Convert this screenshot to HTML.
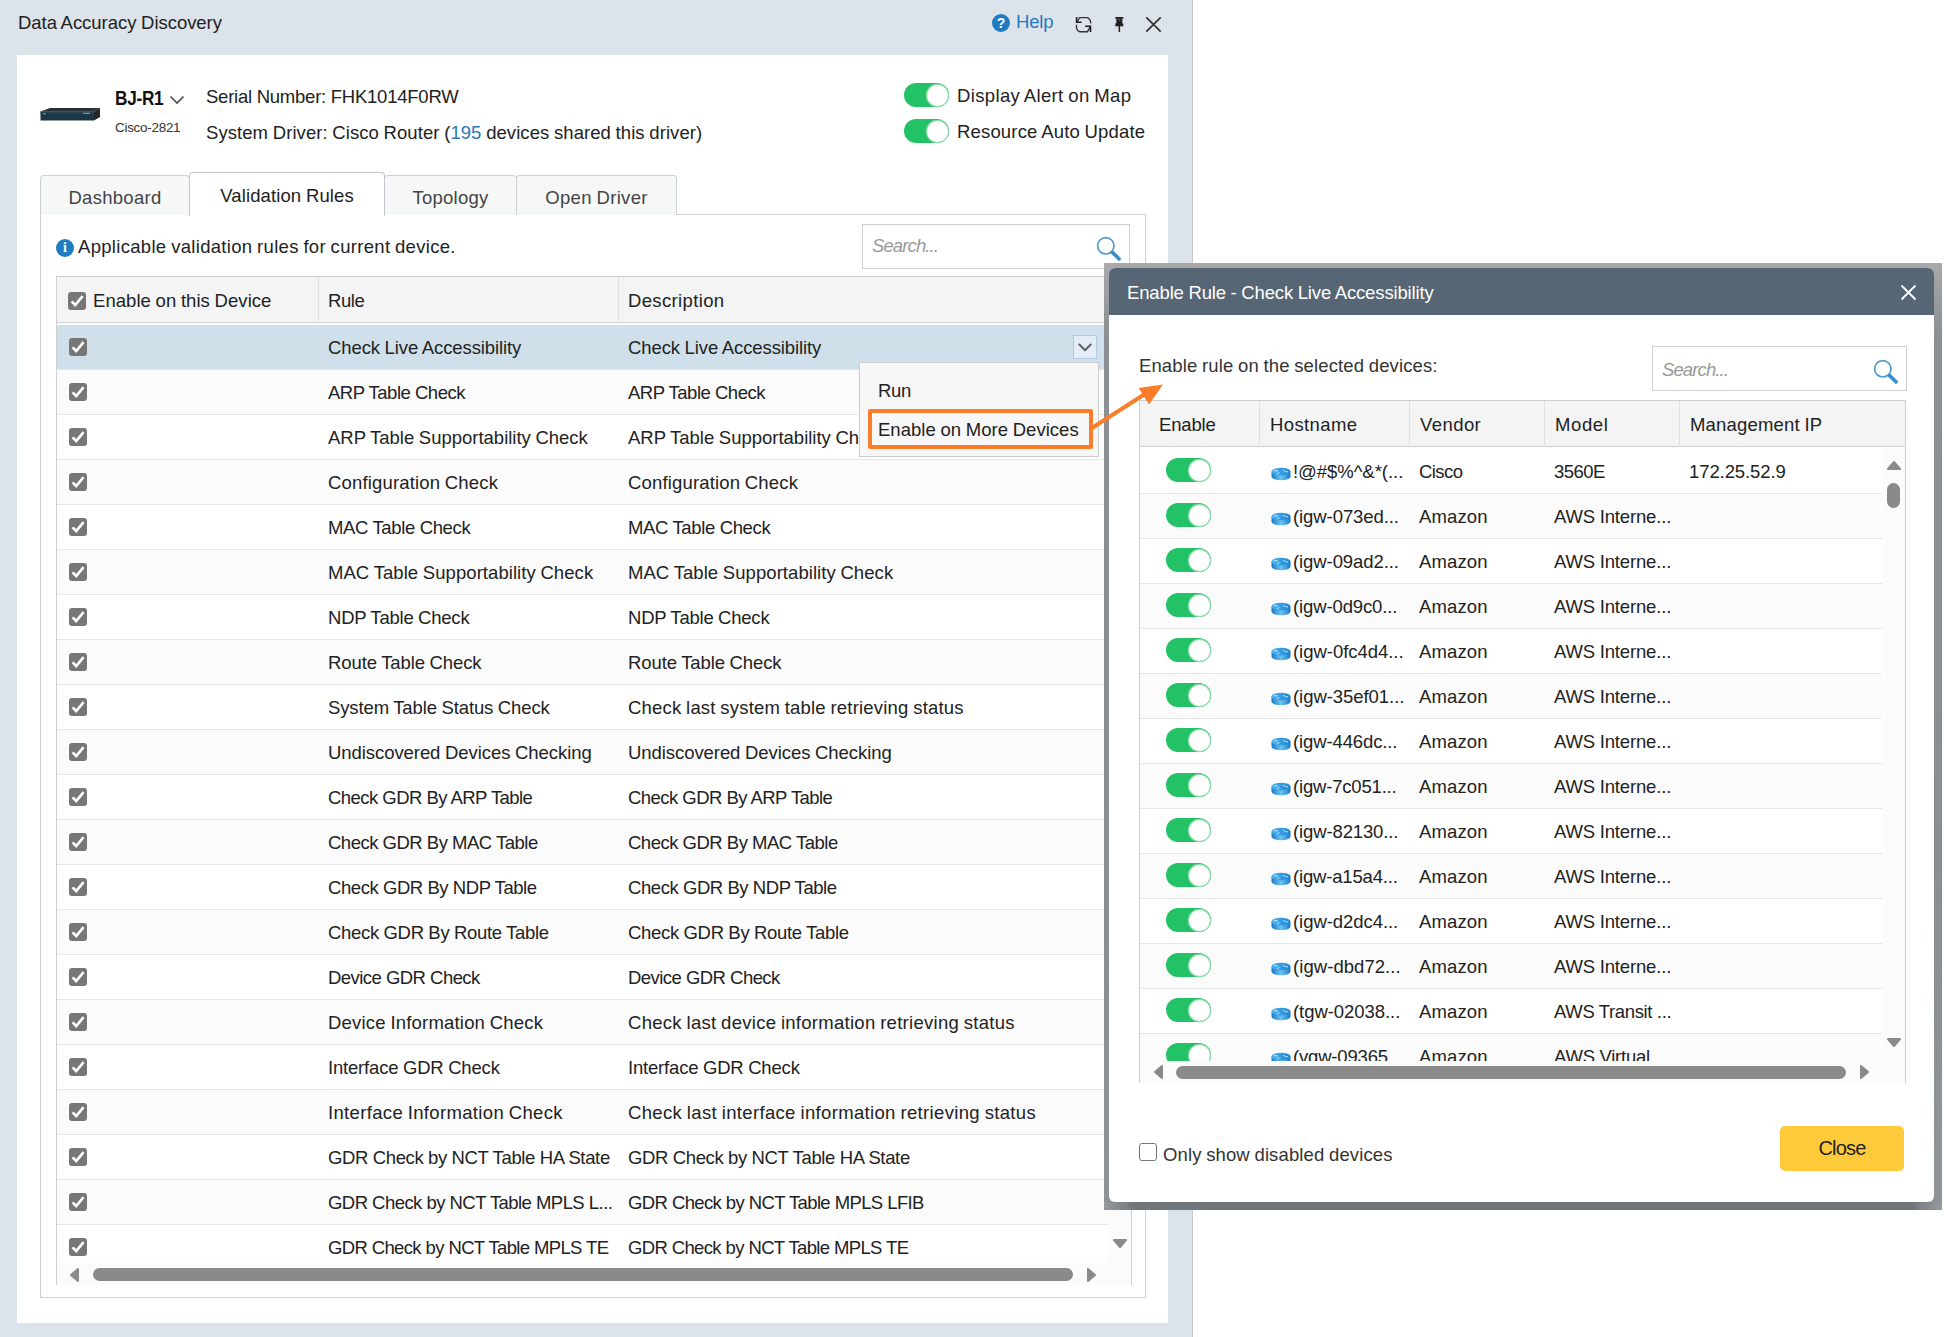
<!DOCTYPE html>
<html><head><meta charset="utf-8"><style>
*{box-sizing:border-box;margin:0;padding:0}
html,body{width:1955px;height:1337px;overflow:hidden;background:#fff;font-family:"Liberation Sans",sans-serif;color:#222;font-size:18.5px}
.a{position:absolute}
.t{position:absolute;white-space:nowrap;line-height:20px}
.tg{position:absolute;width:45px;height:24px;border-radius:12px;background:#23c266}
.tg .kn{position:absolute;right:1.5px;top:1.5px;width:21px;height:21px;border-radius:50%;background:#fff;box-shadow:0 0 0 1.2px #86dca8}
.row{position:absolute;height:45px;border-bottom:1px solid #e6e6e6}
</style></head><body>

<div class="a" style="left:0;top:0;width:1192px;height:1337px;background:#dde3ea"></div>
<div class="a" style="left:1192px;top:0;width:1px;height:1337px;background:#c8c8c8"></div>
<div class="t" style="left:18px;top:13px;color:#222;letter-spacing:-0.035px;word-spacing:-0.434px">Data Accuracy Discovery</div>
<div class="a" style="left:992px;top:14px;width:18px;height:18px;border-radius:50%;background:#1f7cc0;color:#fff;font-weight:bold;font-size:14px;line-height:18px;text-align:center">?</div>
<div class="t" style="left:1016px;top:12px;color:#1f7cc0;--os:17.3;letter-spacing:-0.198px;word-spacing:0.000px">Help</div>
<svg class="a" style="left:1075px;top:16px" width="18" height="18" viewBox="0 0 18 18"><path d="M1.9 6 L4.6 1.7 L12.3 1.6 Q15.4 2.6 15.8 7.4" stroke="#333" stroke-width="1.35" fill="none"/><path d="M1.6 1 L1.6 6.3 L6.6 6.3" stroke="#1e1e1e" stroke-width="1.6" fill="none"/><path d="M1.5 8.7 L1.6 12.3 Q2.2 14.9 4.6 15.7 L12.4 15.7 L15.3 10.8" stroke="#333" stroke-width="1.35" fill="none"/><path d="M15.5 16.1 L15.5 10.3 L10.2 10.3" stroke="#1e1e1e" stroke-width="1.6" fill="none"/></svg>
<svg class="a" style="left:1114px;top:16px" width="11" height="17" viewBox="0 0 11 17"><rect x="1.3" y="1" width="8" height="1.8" fill="#222"/><rect x="2.3" y="2.5" width="6" height="5.5" fill="#222"/><rect x="4.3" y="3.5" width="2" height="1.2" fill="#666"/><rect x="1.3" y="7.5" width="8" height="2.8" fill="#222"/><rect x="4.6" y="10" width="1.5" height="6" fill="#222"/></svg>
<svg class="a" style="left:1145px;top:16px" width="17" height="17" viewBox="0 0 17 17"><path d="M1.3 1.3 L15.7 15.7 M15.7 1.3 L1.3 15.7" stroke="#333" stroke-width="1.7"/></svg>
<div class="a" style="left:17px;top:55px;width:1151px;height:1268px;background:#fff"></div>
<svg class="a" style="left:40px;top:107px" width="61" height="14" viewBox="0 0 61 14"><path d="M0.5 4.5 L10 1 L60 1 L54 4.5 Z" fill="#2b3036"/><path d="M54 4.5 L60 1 L60 10 L54 13.5 Z" fill="#22272b"/><rect x="0.5" y="4.5" width="53.5" height="9" fill="#1d3645"/><rect x="0.5" y="4.5" width="53.5" height="2.5" fill="#27404f"/><rect x="3" y="6.3" width="3" height="1" fill="#7f9aa5"/><rect x="43" y="5.8" width="7" height="1" fill="#8fa5b0"/></svg>
<div class="t" style="left:115px;top:88px;font-size:20px;font-weight:bold;color:#111;letter-spacing:-0.3px;transform:scaleX(0.86);transform-origin:0 0">BJ-R1</div>
<svg class="a" style="left:169px;top:95px" width="16" height="10" viewBox="0 0 16 10"><path d="M1.5 1.5 L8 8 L14.5 1.5" stroke="#4a4a4a" stroke-width="1.6" fill="none"/></svg>
<div class="t" style="left:115px;top:118px;font-size:13.5px;color:#333;--os:13;letter-spacing:-0.295px;word-spacing:0.000px">Cisco-2821</div>
<div class="t" style="left:206px;top:87px;color:#222;letter-spacing:-0.223px;word-spacing:-0.246px">Serial Number: FHK1014F0RW</div>
<div class="t" style="left:206px;top:123px;color:#222;letter-spacing:0.065px;word-spacing:-0.534px">System Driver: Cisco Router (<span style="color:#2878b8">195</span> devices shared this driver)</div>
<div class="tg" style="left:904px;top:83px"><div class="kn"></div></div>
<div class="t" style="left:957px;top:86px;color:#222;letter-spacing:0.356px;word-spacing:-0.825px">Display Alert on Map</div>
<div class="tg" style="left:904px;top:119px"><div class="kn"></div></div>
<div class="t" style="left:957px;top:122px;color:#222;letter-spacing:0.170px;word-spacing:-0.639px">Resource Auto Update</div>
<div class="a" style="left:40px;top:214px;width:1106px;height:1084px;border:1px solid #cfcfcf"></div>
<div class="a" style="left:40px;top:175px;width:150px;height:40px;background:#f6f8f8;border:1px solid #cdd1d5;border-bottom:none;border-radius:4px 4px 0 0"><div class="t" style="left:0;width:100%;text-align:center;top:12px;color:#444;letter-spacing:0.283px;word-spacing:0.000px">Dashboard</div></div>
<div class="a" style="left:384px;top:175px;width:133px;height:40px;background:#f6f8f8;border:1px solid #cdd1d5;border-bottom:none;border-radius:4px 4px 0 0"><div class="t" style="left:0;width:100%;text-align:center;top:12px;color:#444;letter-spacing:0.261px;word-spacing:0.000px">Topology</div></div>
<div class="a" style="left:516px;top:175px;width:161px;height:40px;background:#f6f8f8;border:1px solid #cdd1d5;border-bottom:none;border-radius:4px 4px 0 0"><div class="t" style="left:0;width:100%;text-align:center;top:12px;color:#444;letter-spacing:0.345px;word-spacing:-0.814px">Open Driver</div></div>
<div class="a" style="left:189px;top:172px;width:196px;height:44px;background:#fff;border:1px solid #c4c8cc;border-bottom:none;border-radius:4px 4px 0 0"><div class="t" style="left:0;width:100%;text-align:center;top:13px;color:#222;letter-spacing:0.116px;word-spacing:-0.585px">Validation Rules</div></div>
<div class="a" style="left:56px;top:239px;width:18px;height:18px;border-radius:50%;background:#1f7cc0;color:#fff;font-weight:bold;font-size:14px;line-height:18px;text-align:center;font-family:'Liberation Serif',serif">i</div>
<div class="t" style="left:78px;top:237px;color:#222;letter-spacing:0.310px;word-spacing:-0.779px">Applicable validation rules for current device.</div>
<div class="a" style="left:862px;top:224px;width:268px;height:45px;border:1px solid #cfcfcf;background:#fff"><div class="t" style="left:9px;top:11px;color:#999;font-style:italic;letter-spacing:-0.879px;word-spacing:0.000px">Search...</div><div class="a" style="left:232px;top:10px"><svg width="28" height="28" viewBox="0 0 28 28"><circle cx="10.8" cy="10.8" r="8.2" stroke="#4e98ce" stroke-width="1.7" fill="none"/><path d="M16.6 16.6 L25.2 25" stroke="#3a8cc6" stroke-width="3.6" stroke-linecap="butt"/></svg></div></div>
<div class="a" style="left:56px;top:276px;width:1076px;height:1009px;border:1px solid #cfcfcf;border-bottom:none;background:#fff;overflow:hidden">
<div class="a" style="left:0;top:0;width:1075px;height:46px;background:#f4f4f4;border-bottom:1px solid #cfcfcf"></div>
<div class="a" style="left:261px;top:0;width:1px;height:46px;background:#e0e0e0"></div>
<div class="a" style="left:561px;top:0;width:1px;height:46px;background:#e0e0e0"></div>
<div class="a" style="left:11px;top:15px"><svg width="18" height="18" viewBox="0 0 18 18"><rect x="0" y="0" width="18" height="18" rx="3" fill="#777"/><path d="M3.6 9.4 L7.2 13 L14.6 4.2" stroke="#fff" stroke-width="2.6" fill="none" stroke-linecap="butt"/></svg></div>
<div class="t" style="left:36px;top:14px;letter-spacing:0.050px;word-spacing:-0.518px">Enable on this Device</div>
<div class="t" style="left:271px;top:14px;letter-spacing:-0.406px;word-spacing:0.000px">Rule</div>
<div class="t" style="left:571px;top:14px;letter-spacing:0.362px;word-spacing:0.000px">Description</div>
<div class="row" style="left:0;top:48px;width:1051px;background:#cfe0ea"></div>
<div class="a" style="left:12px;top:61px"><svg width="18" height="18" viewBox="0 0 18 18"><rect x="0" y="0" width="18" height="18" rx="3" fill="#777"/><path d="M3.6 9.4 L7.2 13 L14.6 4.2" stroke="#fff" stroke-width="2.6" fill="none" stroke-linecap="butt"/></svg></div>
<div class="t" style="left:271px;top:61px;letter-spacing:-0.100px;word-spacing:-0.369px">Check Live Accessibility</div>
<div class="t" style="left:571px;top:61px;letter-spacing:-0.100px;word-spacing:-0.369px">Check Live Accessibility</div>
<div class="row" style="left:0;top:93px;width:1051px;background:#fbfbfb"></div>
<div class="a" style="left:12px;top:106px"><svg width="18" height="18" viewBox="0 0 18 18"><rect x="0" y="0" width="18" height="18" rx="3" fill="#777"/><path d="M3.6 9.4 L7.2 13 L14.6 4.2" stroke="#fff" stroke-width="2.6" fill="none" stroke-linecap="butt"/></svg></div>
<div class="t" style="left:271px;top:106px;letter-spacing:-0.495px;word-spacing:0.026px">ARP Table Check</div>
<div class="t" style="left:571px;top:106px;letter-spacing:-0.495px;word-spacing:0.026px">ARP Table Check</div>
<div class="row" style="left:0;top:138px;width:1051px;background:#fff"></div>
<div class="a" style="left:12px;top:151px"><svg width="18" height="18" viewBox="0 0 18 18"><rect x="0" y="0" width="18" height="18" rx="3" fill="#777"/><path d="M3.6 9.4 L7.2 13 L14.6 4.2" stroke="#fff" stroke-width="2.6" fill="none" stroke-linecap="butt"/></svg></div>
<div class="t" style="left:271px;top:151px;letter-spacing:-0.011px;word-spacing:-0.457px">ARP Table Supportability Check</div>
<div class="t" style="left:571px;top:151px;letter-spacing:-0.011px;word-spacing:-0.457px">ARP Table Supportability Check</div>
<div class="row" style="left:0;top:183px;width:1051px;background:#fbfbfb"></div>
<div class="a" style="left:12px;top:196px"><svg width="18" height="18" viewBox="0 0 18 18"><rect x="0" y="0" width="18" height="18" rx="3" fill="#777"/><path d="M3.6 9.4 L7.2 13 L14.6 4.2" stroke="#fff" stroke-width="2.6" fill="none" stroke-linecap="butt"/></svg></div>
<div class="t" style="left:271px;top:196px;letter-spacing:0.164px;word-spacing:-0.632px">Configuration Check</div>
<div class="t" style="left:571px;top:196px;letter-spacing:0.164px;word-spacing:-0.632px">Configuration Check</div>
<div class="row" style="left:0;top:228px;width:1051px;background:#fff"></div>
<div class="a" style="left:12px;top:241px"><svg width="18" height="18" viewBox="0 0 18 18"><rect x="0" y="0" width="18" height="18" rx="3" fill="#777"/><path d="M3.6 9.4 L7.2 13 L14.6 4.2" stroke="#fff" stroke-width="2.6" fill="none" stroke-linecap="butt"/></svg></div>
<div class="t" style="left:271px;top:241px;letter-spacing:-0.337px;word-spacing:-0.132px">MAC Table Check</div>
<div class="t" style="left:571px;top:241px;letter-spacing:-0.337px;word-spacing:-0.132px">MAC Table Check</div>
<div class="row" style="left:0;top:273px;width:1051px;background:#fbfbfb"></div>
<div class="a" style="left:12px;top:286px"><svg width="18" height="18" viewBox="0 0 18 18"><rect x="0" y="0" width="18" height="18" rx="3" fill="#777"/><path d="M3.6 9.4 L7.2 13 L14.6 4.2" stroke="#fff" stroke-width="2.6" fill="none" stroke-linecap="butt"/></svg></div>
<div class="t" style="left:271px;top:286px;letter-spacing:0.061px;word-spacing:-0.530px">MAC Table Supportability Check</div>
<div class="t" style="left:571px;top:286px;letter-spacing:0.061px;word-spacing:-0.530px">MAC Table Supportability Check</div>
<div class="row" style="left:0;top:318px;width:1051px;background:#fff"></div>
<div class="a" style="left:12px;top:331px"><svg width="18" height="18" viewBox="0 0 18 18"><rect x="0" y="0" width="18" height="18" rx="3" fill="#777"/><path d="M3.6 9.4 L7.2 13 L14.6 4.2" stroke="#fff" stroke-width="2.6" fill="none" stroke-linecap="butt"/></svg></div>
<div class="t" style="left:271px;top:331px;letter-spacing:-0.230px;word-spacing:-0.238px">NDP Table Check</div>
<div class="t" style="left:571px;top:331px;letter-spacing:-0.230px;word-spacing:-0.238px">NDP Table Check</div>
<div class="row" style="left:0;top:363px;width:1051px;background:#fbfbfb"></div>
<div class="a" style="left:12px;top:376px"><svg width="18" height="18" viewBox="0 0 18 18"><rect x="0" y="0" width="18" height="18" rx="3" fill="#777"/><path d="M3.6 9.4 L7.2 13 L14.6 4.2" stroke="#fff" stroke-width="2.6" fill="none" stroke-linecap="butt"/></svg></div>
<div class="t" style="left:271px;top:376px;letter-spacing:-0.102px;word-spacing:-0.367px">Route Table Check</div>
<div class="t" style="left:571px;top:376px;letter-spacing:-0.102px;word-spacing:-0.367px">Route Table Check</div>
<div class="row" style="left:0;top:408px;width:1051px;background:#fff"></div>
<div class="a" style="left:12px;top:421px"><svg width="18" height="18" viewBox="0 0 18 18"><rect x="0" y="0" width="18" height="18" rx="3" fill="#777"/><path d="M3.6 9.4 L7.2 13 L14.6 4.2" stroke="#fff" stroke-width="2.6" fill="none" stroke-linecap="butt"/></svg></div>
<div class="t" style="left:271px;top:421px;letter-spacing:-0.128px;word-spacing:-0.341px">System Table Status Check</div>
<div class="t" style="left:571px;top:421px;letter-spacing:0.194px;word-spacing:-0.662px">Check last system table retrieving status</div>
<div class="row" style="left:0;top:453px;width:1051px;background:#fbfbfb"></div>
<div class="a" style="left:12px;top:466px"><svg width="18" height="18" viewBox="0 0 18 18"><rect x="0" y="0" width="18" height="18" rx="3" fill="#777"/><path d="M3.6 9.4 L7.2 13 L14.6 4.2" stroke="#fff" stroke-width="2.6" fill="none" stroke-linecap="butt"/></svg></div>
<div class="t" style="left:271px;top:466px;letter-spacing:-0.064px;word-spacing:-0.404px">Undiscovered Devices Checking</div>
<div class="t" style="left:571px;top:466px;letter-spacing:-0.064px;word-spacing:-0.404px">Undiscovered Devices Checking</div>
<div class="row" style="left:0;top:498px;width:1051px;background:#fff"></div>
<div class="a" style="left:12px;top:511px"><svg width="18" height="18" viewBox="0 0 18 18"><rect x="0" y="0" width="18" height="18" rx="3" fill="#777"/><path d="M3.6 9.4 L7.2 13 L14.6 4.2" stroke="#fff" stroke-width="2.6" fill="none" stroke-linecap="butt"/></svg></div>
<div class="t" style="left:271px;top:511px;letter-spacing:-0.561px;word-spacing:0.092px">Check GDR By ARP Table</div>
<div class="t" style="left:571px;top:511px;letter-spacing:-0.561px;word-spacing:0.092px">Check GDR By ARP Table</div>
<div class="row" style="left:0;top:543px;width:1051px;background:#fbfbfb"></div>
<div class="a" style="left:12px;top:556px"><svg width="18" height="18" viewBox="0 0 18 18"><rect x="0" y="0" width="18" height="18" rx="3" fill="#777"/><path d="M3.6 9.4 L7.2 13 L14.6 4.2" stroke="#fff" stroke-width="2.6" fill="none" stroke-linecap="butt"/></svg></div>
<div class="t" style="left:271px;top:556px;letter-spacing:-0.509px;word-spacing:0.040px">Check GDR By MAC Table</div>
<div class="t" style="left:571px;top:556px;letter-spacing:-0.509px;word-spacing:0.040px">Check GDR By MAC Table</div>
<div class="row" style="left:0;top:588px;width:1051px;background:#fff"></div>
<div class="a" style="left:12px;top:601px"><svg width="18" height="18" viewBox="0 0 18 18"><rect x="0" y="0" width="18" height="18" rx="3" fill="#777"/><path d="M3.6 9.4 L7.2 13 L14.6 4.2" stroke="#fff" stroke-width="2.6" fill="none" stroke-linecap="butt"/></svg></div>
<div class="t" style="left:271px;top:601px;letter-spacing:-0.434px;word-spacing:-0.035px">Check GDR By NDP Table</div>
<div class="t" style="left:571px;top:601px;letter-spacing:-0.434px;word-spacing:-0.035px">Check GDR By NDP Table</div>
<div class="row" style="left:0;top:633px;width:1051px;background:#fbfbfb"></div>
<div class="a" style="left:12px;top:646px"><svg width="18" height="18" viewBox="0 0 18 18"><rect x="0" y="0" width="18" height="18" rx="3" fill="#777"/><path d="M3.6 9.4 L7.2 13 L14.6 4.2" stroke="#fff" stroke-width="2.6" fill="none" stroke-linecap="butt"/></svg></div>
<div class="t" style="left:271px;top:646px;letter-spacing:-0.317px;word-spacing:-0.151px">Check GDR By Route Table</div>
<div class="t" style="left:571px;top:646px;letter-spacing:-0.317px;word-spacing:-0.151px">Check GDR By Route Table</div>
<div class="row" style="left:0;top:678px;width:1051px;background:#fff"></div>
<div class="a" style="left:12px;top:691px"><svg width="18" height="18" viewBox="0 0 18 18"><rect x="0" y="0" width="18" height="18" rx="3" fill="#777"/><path d="M3.6 9.4 L7.2 13 L14.6 4.2" stroke="#fff" stroke-width="2.6" fill="none" stroke-linecap="butt"/></svg></div>
<div class="t" style="left:271px;top:691px;letter-spacing:-0.547px;word-spacing:0.078px">Device GDR Check</div>
<div class="t" style="left:571px;top:691px;letter-spacing:-0.547px;word-spacing:0.078px">Device GDR Check</div>
<div class="row" style="left:0;top:723px;width:1051px;background:#fbfbfb"></div>
<div class="a" style="left:12px;top:736px"><svg width="18" height="18" viewBox="0 0 18 18"><rect x="0" y="0" width="18" height="18" rx="3" fill="#777"/><path d="M3.6 9.4 L7.2 13 L14.6 4.2" stroke="#fff" stroke-width="2.6" fill="none" stroke-linecap="butt"/></svg></div>
<div class="t" style="left:271px;top:736px;letter-spacing:0.196px;word-spacing:-0.664px">Device Information Check</div>
<div class="t" style="left:571px;top:736px;letter-spacing:0.280px;word-spacing:-0.749px">Check last device information retrieving status</div>
<div class="row" style="left:0;top:768px;width:1051px;background:#fff"></div>
<div class="a" style="left:12px;top:781px"><svg width="18" height="18" viewBox="0 0 18 18"><rect x="0" y="0" width="18" height="18" rx="3" fill="#777"/><path d="M3.6 9.4 L7.2 13 L14.6 4.2" stroke="#fff" stroke-width="2.6" fill="none" stroke-linecap="butt"/></svg></div>
<div class="t" style="left:271px;top:781px;letter-spacing:-0.187px;word-spacing:-0.282px">Interface GDR Check</div>
<div class="t" style="left:571px;top:781px;letter-spacing:-0.187px;word-spacing:-0.282px">Interface GDR Check</div>
<div class="row" style="left:0;top:813px;width:1051px;background:#fbfbfb"></div>
<div class="a" style="left:12px;top:826px"><svg width="18" height="18" viewBox="0 0 18 18"><rect x="0" y="0" width="18" height="18" rx="3" fill="#777"/><path d="M3.6 9.4 L7.2 13 L14.6 4.2" stroke="#fff" stroke-width="2.6" fill="none" stroke-linecap="butt"/></svg></div>
<div class="t" style="left:271px;top:826px;letter-spacing:0.343px;word-spacing:-0.812px">Interface Information Check</div>
<div class="t" style="left:571px;top:826px;letter-spacing:0.346px;word-spacing:-0.814px">Check last interface information retrieving status</div>
<div class="row" style="left:0;top:858px;width:1051px;background:#fff"></div>
<div class="a" style="left:12px;top:871px"><svg width="18" height="18" viewBox="0 0 18 18"><rect x="0" y="0" width="18" height="18" rx="3" fill="#777"/><path d="M3.6 9.4 L7.2 13 L14.6 4.2" stroke="#fff" stroke-width="2.6" fill="none" stroke-linecap="butt"/></svg></div>
<div class="t" style="left:271px;top:871px;letter-spacing:-0.350px;word-spacing:-0.118px">GDR Check by NCT Table HA State</div>
<div class="t" style="left:571px;top:871px;letter-spacing:-0.350px;word-spacing:-0.118px">GDR Check by NCT Table HA State</div>
<div class="row" style="left:0;top:903px;width:1051px;background:#fbfbfb"></div>
<div class="a" style="left:12px;top:916px"><svg width="18" height="18" viewBox="0 0 18 18"><rect x="0" y="0" width="18" height="18" rx="3" fill="#777"/><path d="M3.6 9.4 L7.2 13 L14.6 4.2" stroke="#fff" stroke-width="2.6" fill="none" stroke-linecap="butt"/></svg></div>
<div class="t" style="left:271px;top:916px;letter-spacing:-0.557px;word-spacing:0.089px">GDR Check by NCT Table MPLS L...</div>
<div class="t" style="left:571px;top:916px;letter-spacing:-0.629px;word-spacing:0.160px">GDR Check by NCT Table MPLS LFIB</div>
<div class="row" style="left:0;top:948px;width:1051px;background:#fff"></div>
<div class="a" style="left:12px;top:961px"><svg width="18" height="18" viewBox="0 0 18 18"><rect x="0" y="0" width="18" height="18" rx="3" fill="#777"/><path d="M3.6 9.4 L7.2 13 L14.6 4.2" stroke="#fff" stroke-width="2.6" fill="none" stroke-linecap="butt"/></svg></div>
<div class="t" style="left:271px;top:961px;letter-spacing:-0.666px;word-spacing:0.197px">GDR Check by NCT Table MPLS TE</div>
<div class="t" style="left:571px;top:961px;letter-spacing:-0.666px;word-spacing:0.197px">GDR Check by NCT Table MPLS TE</div>
<div class="a" style="left:1051px;top:47px;width:24px;height:939px;background:#fbfbfb"></div>
<div class="a" style="left:0;top:986px;width:1075px;height:23px;background:#fbfbfb"></div>
<svg class="a" style="left:1055px;top:961px" width="16" height="12" viewBox="0 0 16 12"><path d="M2 2 L14 2 L8 9 Z" fill="#8a8a8a" stroke="#8a8a8a" stroke-width="2" stroke-linejoin="round"/></svg>
<svg class="a" style="left:10px;top:990px" width="14" height="16" viewBox="0 0 14 16"><path d="M11 2 L11 14 L4 8 Z" fill="#8a8a8a" stroke="#8a8a8a" stroke-width="2" stroke-linejoin="round"/></svg>
<svg class="a" style="left:1028px;top:990px" width="14" height="16" viewBox="0 0 14 16"><path d="M3 2 L3 14 L10 8 Z" fill="#8a8a8a" stroke="#8a8a8a" stroke-width="2" stroke-linejoin="round"/></svg>
<div class="a" style="left:36px;top:991px;width:980px;height:13px;border-radius:7px;background:#8a8a8a"></div>
</div>
<div class="a" style="left:1073px;top:335px;width:24px;height:24px;background:#e4ecf8;border:1.5px solid #b3c9e4"></div>
<svg class="a" style="left:1077px;top:342px" width="16" height="11" viewBox="0 0 16 11"><path d="M2.3 2.5 L8 8.3 L13.7 2.5" stroke="#606264" stroke-width="2" fill="none" stroke-linecap="round" stroke-linejoin="round"/></svg>
<div class="a" style="left:859px;top:362px;width:240px;height:95px;background:#f7f7f7;border:1px solid #cdcdcd"></div>
<div class="t" style="left:878px;top:381px;letter-spacing:-0.352px;word-spacing:0.000px">Run</div>
<div class="a" style="left:868px;top:409px;width:225px;height:40px;border:4px solid #fb7d2a;border-radius:2px"></div>
<div class="t" style="left:878px;top:420px;letter-spacing:0.028px;word-spacing:-0.497px">Enable on More Devices</div>
<div class="a" style="left:1104px;top:263px;width:838px;height:947px;background:linear-gradient(180deg,#a9a9a9 0px,#8c9094 70px,#8a8e92 600px,#8e9398 947px)"></div>
<div class="a" style="left:1104px;top:1202px;width:838px;height:8px;background:linear-gradient(90deg,#979b9f 0px,#6f777e 30px,#6f777e 808px,#979b9f 838px)"></div>
<div class="a" style="left:1109px;top:268px;width:825px;height:934px;background:#fff;border-radius:6px;overflow:hidden">
<div class="a" style="left:0;top:0;width:825px;height:47px;background:#566674"></div>
<div class="t" style="left:18px;top:15px;color:#fff;letter-spacing:-0.141px;word-spacing:-0.328px">Enable Rule - Check Live Accessibility</div>
<svg class="a" style="left:791px;top:16px" width="17" height="17" viewBox="0 0 17 17"><path d="M1.5 1.5 L15.5 15.5 M15.5 1.5 L1.5 15.5" stroke="#fff" stroke-width="1.8"/></svg>
<div class="t" style="left:30px;top:88px;color:#333;letter-spacing:0.119px;word-spacing:-0.588px">Enable rule on the selected devices:</div>
<div class="a" style="left:543px;top:78px;width:255px;height:45px;border:1px solid #cfcfcf;background:#fff"><div class="t" style="left:9px;top:13px;color:#999;font-style:italic;letter-spacing:-0.879px;word-spacing:0.000px">Search...</div><div class="a" style="left:219px;top:11px"><svg width="28" height="28" viewBox="0 0 28 28"><circle cx="10.8" cy="10.8" r="8.2" stroke="#4e98ce" stroke-width="1.7" fill="none"/><path d="M16.6 16.6 L25.2 25" stroke="#3a8cc6" stroke-width="3.6" stroke-linecap="butt"/></svg></div></div>
</div>
<div class="a" style="left:1139px;top:400px;width:767px;height:683px;border:1px solid #cfcfcf;border-bottom:none;overflow:hidden;background:#fff">
<div class="a" style="left:0;top:0;width:766px;height:46px;background:#f4f4f4;border-bottom:1px solid #cfcfcf"></div>
<div class="a" style="left:119px;top:0;width:1px;height:46px;background:#e0e0e0"></div>
<div class="a" style="left:269px;top:0;width:1px;height:46px;background:#e0e0e0"></div>
<div class="a" style="left:404px;top:0;width:1px;height:46px;background:#e0e0e0"></div>
<div class="a" style="left:539px;top:0;width:1px;height:46px;background:#e0e0e0"></div>
<div class="t" style="left:19px;top:14px;letter-spacing:-0.166px;word-spacing:0.000px">Enable</div>
<div class="t" style="left:130px;top:14px;letter-spacing:0.391px;word-spacing:0.000px">Hostname</div>
<div class="t" style="left:280px;top:14px;letter-spacing:0.428px;word-spacing:0.000px">Vendor</div>
<div class="t" style="left:415px;top:14px;letter-spacing:0.609px;word-spacing:0.000px">Model</div>
<div class="t" style="left:550px;top:14px;letter-spacing:0.180px;word-spacing:-0.649px">Management IP</div>
<div class="row" style="left:0;top:48px;width:742px;background:#fff"></div>
<div class="tg" style="left:26px;top:57px"><div class="kn"></div></div>
<div class="a" style="left:131px;top:63px"><svg width="20" height="14" viewBox="0 0 20 14"><defs><linearGradient id="rs" x1="0" y1="0" x2="1" y2="0"><stop offset="0" stop-color="#1b78c4"/><stop offset="0.5" stop-color="#6cc4f4"/><stop offset="1" stop-color="#1b78c4"/></linearGradient><linearGradient id="rt" x1="0" y1="0" x2="1" y2="0"><stop offset="0" stop-color="#4cb4ee"/><stop offset="1" stop-color="#1f86d2"/></linearGradient></defs><path d="M0.5 4.5 L0.5 9.5 A9.5 3.8 0 0 0 19.5 9.5 L19.5 4.5 Z" fill="url(#rs)"/><ellipse cx="10" cy="4.6" rx="9.5" ry="3.9" fill="url(#rt)"/><path d="M3 3.6 L7 4 M6 7 L8.5 5.6 M12 3 L14.5 4.6 L17 4.9" stroke="#e6f4fd" stroke-width="0.8" fill="none"/></svg></div>
<div class="t" style="left:153px;top:61px;letter-spacing:-0.043px;word-spacing:0.000px">!@#$%^&amp;*(...</div>
<div class="t" style="left:279px;top:61px;letter-spacing:-0.578px;word-spacing:0.000px">Cisco</div>
<div class="t" style="left:414px;top:61px;letter-spacing:-0.566px;word-spacing:0.000px">3560E</div>
<div class="t" style="left:549px;top:61px;letter-spacing:-0.091px;word-spacing:0.000px">172.25.52.9</div>
<div class="row" style="left:0;top:93px;width:742px;background:#fbfbfb"></div>
<div class="tg" style="left:26px;top:102px"><div class="kn"></div></div>
<div class="a" style="left:131px;top:108px"><svg width="20" height="14" viewBox="0 0 20 14"><defs><linearGradient id="rs" x1="0" y1="0" x2="1" y2="0"><stop offset="0" stop-color="#1b78c4"/><stop offset="0.5" stop-color="#6cc4f4"/><stop offset="1" stop-color="#1b78c4"/></linearGradient><linearGradient id="rt" x1="0" y1="0" x2="1" y2="0"><stop offset="0" stop-color="#4cb4ee"/><stop offset="1" stop-color="#1f86d2"/></linearGradient></defs><path d="M0.5 4.5 L0.5 9.5 A9.5 3.8 0 0 0 19.5 9.5 L19.5 4.5 Z" fill="url(#rs)"/><ellipse cx="10" cy="4.6" rx="9.5" ry="3.9" fill="url(#rt)"/><path d="M3 3.6 L7 4 M6 7 L8.5 5.6 M12 3 L14.5 4.6 L17 4.9" stroke="#e6f4fd" stroke-width="0.8" fill="none"/></svg></div>
<div class="t" style="left:153px;top:106px;letter-spacing:-0.079px;word-spacing:0.000px">(igw-073ed...</div>
<div class="t" style="left:279px;top:106px;letter-spacing:0.131px;word-spacing:0.000px">Amazon</div>
<div class="t" style="left:414px;top:106px;letter-spacing:-0.154px;word-spacing:-0.315px">AWS Interne...</div>
<div class="t" style="left:549px;top:106px"></div>
<div class="row" style="left:0;top:138px;width:742px;background:#fff"></div>
<div class="tg" style="left:26px;top:147px"><div class="kn"></div></div>
<div class="a" style="left:131px;top:153px"><svg width="20" height="14" viewBox="0 0 20 14"><defs><linearGradient id="rs" x1="0" y1="0" x2="1" y2="0"><stop offset="0" stop-color="#1b78c4"/><stop offset="0.5" stop-color="#6cc4f4"/><stop offset="1" stop-color="#1b78c4"/></linearGradient><linearGradient id="rt" x1="0" y1="0" x2="1" y2="0"><stop offset="0" stop-color="#4cb4ee"/><stop offset="1" stop-color="#1f86d2"/></linearGradient></defs><path d="M0.5 4.5 L0.5 9.5 A9.5 3.8 0 0 0 19.5 9.5 L19.5 4.5 Z" fill="url(#rs)"/><ellipse cx="10" cy="4.6" rx="9.5" ry="3.9" fill="url(#rt)"/><path d="M3 3.6 L7 4 M6 7 L8.5 5.6 M12 3 L14.5 4.6 L17 4.9" stroke="#e6f4fd" stroke-width="0.8" fill="none"/></svg></div>
<div class="t" style="left:153px;top:151px;letter-spacing:-0.086px;word-spacing:0.000px">(igw-09ad2...</div>
<div class="t" style="left:279px;top:151px;letter-spacing:0.131px;word-spacing:0.000px">Amazon</div>
<div class="t" style="left:414px;top:151px;letter-spacing:-0.154px;word-spacing:-0.315px">AWS Interne...</div>
<div class="t" style="left:549px;top:151px"></div>
<div class="row" style="left:0;top:183px;width:742px;background:#fbfbfb"></div>
<div class="tg" style="left:26px;top:192px"><div class="kn"></div></div>
<div class="a" style="left:131px;top:198px"><svg width="20" height="14" viewBox="0 0 20 14"><defs><linearGradient id="rs" x1="0" y1="0" x2="1" y2="0"><stop offset="0" stop-color="#1b78c4"/><stop offset="0.5" stop-color="#6cc4f4"/><stop offset="1" stop-color="#1b78c4"/></linearGradient><linearGradient id="rt" x1="0" y1="0" x2="1" y2="0"><stop offset="0" stop-color="#4cb4ee"/><stop offset="1" stop-color="#1f86d2"/></linearGradient></defs><path d="M0.5 4.5 L0.5 9.5 A9.5 3.8 0 0 0 19.5 9.5 L19.5 4.5 Z" fill="url(#rs)"/><ellipse cx="10" cy="4.6" rx="9.5" ry="3.9" fill="url(#rt)"/><path d="M3 3.6 L7 4 M6 7 L8.5 5.6 M12 3 L14.5 4.6 L17 4.9" stroke="#e6f4fd" stroke-width="0.8" fill="none"/></svg></div>
<div class="t" style="left:153px;top:196px;letter-spacing:-0.121px;word-spacing:0.000px">(igw-0d9c0...</div>
<div class="t" style="left:279px;top:196px;letter-spacing:0.131px;word-spacing:0.000px">Amazon</div>
<div class="t" style="left:414px;top:196px;letter-spacing:-0.154px;word-spacing:-0.315px">AWS Interne...</div>
<div class="t" style="left:549px;top:196px"></div>
<div class="row" style="left:0;top:228px;width:742px;background:#fff"></div>
<div class="tg" style="left:26px;top:237px"><div class="kn"></div></div>
<div class="a" style="left:131px;top:243px"><svg width="20" height="14" viewBox="0 0 20 14"><defs><linearGradient id="rs" x1="0" y1="0" x2="1" y2="0"><stop offset="0" stop-color="#1b78c4"/><stop offset="0.5" stop-color="#6cc4f4"/><stop offset="1" stop-color="#1b78c4"/></linearGradient><linearGradient id="rt" x1="0" y1="0" x2="1" y2="0"><stop offset="0" stop-color="#4cb4ee"/><stop offset="1" stop-color="#1f86d2"/></linearGradient></defs><path d="M0.5 4.5 L0.5 9.5 A9.5 3.8 0 0 0 19.5 9.5 L19.5 4.5 Z" fill="url(#rs)"/><ellipse cx="10" cy="4.6" rx="9.5" ry="3.9" fill="url(#rt)"/><path d="M3 3.6 L7 4 M6 7 L8.5 5.6 M12 3 L14.5 4.6 L17 4.9" stroke="#e6f4fd" stroke-width="0.8" fill="none"/></svg></div>
<div class="t" style="left:153px;top:241px;letter-spacing:-0.038px;word-spacing:0.000px">(igw-0fc4d4...</div>
<div class="t" style="left:279px;top:241px;letter-spacing:0.131px;word-spacing:0.000px">Amazon</div>
<div class="t" style="left:414px;top:241px;letter-spacing:-0.154px;word-spacing:-0.315px">AWS Interne...</div>
<div class="t" style="left:549px;top:241px"></div>
<div class="row" style="left:0;top:273px;width:742px;background:#fbfbfb"></div>
<div class="tg" style="left:26px;top:282px"><div class="kn"></div></div>
<div class="a" style="left:131px;top:288px"><svg width="20" height="14" viewBox="0 0 20 14"><defs><linearGradient id="rs" x1="0" y1="0" x2="1" y2="0"><stop offset="0" stop-color="#1b78c4"/><stop offset="0.5" stop-color="#6cc4f4"/><stop offset="1" stop-color="#1b78c4"/></linearGradient><linearGradient id="rt" x1="0" y1="0" x2="1" y2="0"><stop offset="0" stop-color="#4cb4ee"/><stop offset="1" stop-color="#1f86d2"/></linearGradient></defs><path d="M0.5 4.5 L0.5 9.5 A9.5 3.8 0 0 0 19.5 9.5 L19.5 4.5 Z" fill="url(#rs)"/><ellipse cx="10" cy="4.6" rx="9.5" ry="3.9" fill="url(#rt)"/><path d="M3 3.6 L7 4 M6 7 L8.5 5.6 M12 3 L14.5 4.6 L17 4.9" stroke="#e6f4fd" stroke-width="0.8" fill="none"/></svg></div>
<div class="t" style="left:153px;top:286px;letter-spacing:-0.056px;word-spacing:0.000px">(igw-35ef01...</div>
<div class="t" style="left:279px;top:286px;letter-spacing:0.131px;word-spacing:0.000px">Amazon</div>
<div class="t" style="left:414px;top:286px;letter-spacing:-0.154px;word-spacing:-0.315px">AWS Interne...</div>
<div class="t" style="left:549px;top:286px"></div>
<div class="row" style="left:0;top:318px;width:742px;background:#fff"></div>
<div class="tg" style="left:26px;top:327px"><div class="kn"></div></div>
<div class="a" style="left:131px;top:333px"><svg width="20" height="14" viewBox="0 0 20 14"><defs><linearGradient id="rs" x1="0" y1="0" x2="1" y2="0"><stop offset="0" stop-color="#1b78c4"/><stop offset="0.5" stop-color="#6cc4f4"/><stop offset="1" stop-color="#1b78c4"/></linearGradient><linearGradient id="rt" x1="0" y1="0" x2="1" y2="0"><stop offset="0" stop-color="#4cb4ee"/><stop offset="1" stop-color="#1f86d2"/></linearGradient></defs><path d="M0.5 4.5 L0.5 9.5 A9.5 3.8 0 0 0 19.5 9.5 L19.5 4.5 Z" fill="url(#rs)"/><ellipse cx="10" cy="4.6" rx="9.5" ry="3.9" fill="url(#rt)"/><path d="M3 3.6 L7 4 M6 7 L8.5 5.6 M12 3 L14.5 4.6 L17 4.9" stroke="#e6f4fd" stroke-width="0.8" fill="none"/></svg></div>
<div class="t" style="left:153px;top:331px;letter-spacing:-0.121px;word-spacing:0.000px">(igw-446dc...</div>
<div class="t" style="left:279px;top:331px;letter-spacing:0.131px;word-spacing:0.000px">Amazon</div>
<div class="t" style="left:414px;top:331px;letter-spacing:-0.154px;word-spacing:-0.315px">AWS Interne...</div>
<div class="t" style="left:549px;top:331px"></div>
<div class="row" style="left:0;top:363px;width:742px;background:#fbfbfb"></div>
<div class="tg" style="left:26px;top:372px"><div class="kn"></div></div>
<div class="a" style="left:131px;top:378px"><svg width="20" height="14" viewBox="0 0 20 14"><defs><linearGradient id="rs" x1="0" y1="0" x2="1" y2="0"><stop offset="0" stop-color="#1b78c4"/><stop offset="0.5" stop-color="#6cc4f4"/><stop offset="1" stop-color="#1b78c4"/></linearGradient><linearGradient id="rt" x1="0" y1="0" x2="1" y2="0"><stop offset="0" stop-color="#4cb4ee"/><stop offset="1" stop-color="#1f86d2"/></linearGradient></defs><path d="M0.5 4.5 L0.5 9.5 A9.5 3.8 0 0 0 19.5 9.5 L19.5 4.5 Z" fill="url(#rs)"/><ellipse cx="10" cy="4.6" rx="9.5" ry="3.9" fill="url(#rt)"/><path d="M3 3.6 L7 4 M6 7 L8.5 5.6 M12 3 L14.5 4.6 L17 4.9" stroke="#e6f4fd" stroke-width="0.8" fill="none"/></svg></div>
<div class="t" style="left:153px;top:376px;letter-spacing:-0.182px;word-spacing:0.000px">(igw-7c051...</div>
<div class="t" style="left:279px;top:376px;letter-spacing:0.131px;word-spacing:0.000px">Amazon</div>
<div class="t" style="left:414px;top:376px;letter-spacing:-0.154px;word-spacing:-0.315px">AWS Interne...</div>
<div class="t" style="left:549px;top:376px"></div>
<div class="row" style="left:0;top:408px;width:742px;background:#fff"></div>
<div class="tg" style="left:26px;top:417px"><div class="kn"></div></div>
<div class="a" style="left:131px;top:423px"><svg width="20" height="14" viewBox="0 0 20 14"><defs><linearGradient id="rs" x1="0" y1="0" x2="1" y2="0"><stop offset="0" stop-color="#1b78c4"/><stop offset="0.5" stop-color="#6cc4f4"/><stop offset="1" stop-color="#1b78c4"/></linearGradient><linearGradient id="rt" x1="0" y1="0" x2="1" y2="0"><stop offset="0" stop-color="#4cb4ee"/><stop offset="1" stop-color="#1f86d2"/></linearGradient></defs><path d="M0.5 4.5 L0.5 9.5 A9.5 3.8 0 0 0 19.5 9.5 L19.5 4.5 Z" fill="url(#rs)"/><ellipse cx="10" cy="4.6" rx="9.5" ry="3.9" fill="url(#rt)"/><path d="M3 3.6 L7 4 M6 7 L8.5 5.6 M12 3 L14.5 4.6 L17 4.9" stroke="#e6f4fd" stroke-width="0.8" fill="none"/></svg></div>
<div class="t" style="left:153px;top:421px;letter-spacing:-0.124px;word-spacing:0.000px">(igw-82130...</div>
<div class="t" style="left:279px;top:421px;letter-spacing:0.131px;word-spacing:0.000px">Amazon</div>
<div class="t" style="left:414px;top:421px;letter-spacing:-0.154px;word-spacing:-0.315px">AWS Interne...</div>
<div class="t" style="left:549px;top:421px"></div>
<div class="row" style="left:0;top:453px;width:742px;background:#fbfbfb"></div>
<div class="tg" style="left:26px;top:462px"><div class="kn"></div></div>
<div class="a" style="left:131px;top:468px"><svg width="20" height="14" viewBox="0 0 20 14"><defs><linearGradient id="rs" x1="0" y1="0" x2="1" y2="0"><stop offset="0" stop-color="#1b78c4"/><stop offset="0.5" stop-color="#6cc4f4"/><stop offset="1" stop-color="#1b78c4"/></linearGradient><linearGradient id="rt" x1="0" y1="0" x2="1" y2="0"><stop offset="0" stop-color="#4cb4ee"/><stop offset="1" stop-color="#1f86d2"/></linearGradient></defs><path d="M0.5 4.5 L0.5 9.5 A9.5 3.8 0 0 0 19.5 9.5 L19.5 4.5 Z" fill="url(#rs)"/><ellipse cx="10" cy="4.6" rx="9.5" ry="3.9" fill="url(#rt)"/><path d="M3 3.6 L7 4 M6 7 L8.5 5.6 M12 3 L14.5 4.6 L17 4.9" stroke="#e6f4fd" stroke-width="0.8" fill="none"/></svg></div>
<div class="t" style="left:153px;top:466px;letter-spacing:-0.171px;word-spacing:0.000px">(igw-a15a4...</div>
<div class="t" style="left:279px;top:466px;letter-spacing:0.131px;word-spacing:0.000px">Amazon</div>
<div class="t" style="left:414px;top:466px;letter-spacing:-0.154px;word-spacing:-0.315px">AWS Interne...</div>
<div class="t" style="left:549px;top:466px"></div>
<div class="row" style="left:0;top:498px;width:742px;background:#fff"></div>
<div class="tg" style="left:26px;top:507px"><div class="kn"></div></div>
<div class="a" style="left:131px;top:513px"><svg width="20" height="14" viewBox="0 0 20 14"><defs><linearGradient id="rs" x1="0" y1="0" x2="1" y2="0"><stop offset="0" stop-color="#1b78c4"/><stop offset="0.5" stop-color="#6cc4f4"/><stop offset="1" stop-color="#1b78c4"/></linearGradient><linearGradient id="rt" x1="0" y1="0" x2="1" y2="0"><stop offset="0" stop-color="#4cb4ee"/><stop offset="1" stop-color="#1f86d2"/></linearGradient></defs><path d="M0.5 4.5 L0.5 9.5 A9.5 3.8 0 0 0 19.5 9.5 L19.5 4.5 Z" fill="url(#rs)"/><ellipse cx="10" cy="4.6" rx="9.5" ry="3.9" fill="url(#rt)"/><path d="M3 3.6 L7 4 M6 7 L8.5 5.6 M12 3 L14.5 4.6 L17 4.9" stroke="#e6f4fd" stroke-width="0.8" fill="none"/></svg></div>
<div class="t" style="left:153px;top:511px;letter-spacing:-0.060px;word-spacing:0.000px">(igw-d2dc4...</div>
<div class="t" style="left:279px;top:511px;letter-spacing:0.131px;word-spacing:0.000px">Amazon</div>
<div class="t" style="left:414px;top:511px;letter-spacing:-0.154px;word-spacing:-0.315px">AWS Interne...</div>
<div class="t" style="left:549px;top:511px"></div>
<div class="row" style="left:0;top:543px;width:742px;background:#fbfbfb"></div>
<div class="tg" style="left:26px;top:552px"><div class="kn"></div></div>
<div class="a" style="left:131px;top:558px"><svg width="20" height="14" viewBox="0 0 20 14"><defs><linearGradient id="rs" x1="0" y1="0" x2="1" y2="0"><stop offset="0" stop-color="#1b78c4"/><stop offset="0.5" stop-color="#6cc4f4"/><stop offset="1" stop-color="#1b78c4"/></linearGradient><linearGradient id="rt" x1="0" y1="0" x2="1" y2="0"><stop offset="0" stop-color="#4cb4ee"/><stop offset="1" stop-color="#1f86d2"/></linearGradient></defs><path d="M0.5 4.5 L0.5 9.5 A9.5 3.8 0 0 0 19.5 9.5 L19.5 4.5 Z" fill="url(#rs)"/><ellipse cx="10" cy="4.6" rx="9.5" ry="3.9" fill="url(#rt)"/><path d="M3 3.6 L7 4 M6 7 L8.5 5.6 M12 3 L14.5 4.6 L17 4.9" stroke="#e6f4fd" stroke-width="0.8" fill="none"/></svg></div>
<div class="t" style="left:153px;top:556px;letter-spacing:0.060px;word-spacing:0.000px">(igw-dbd72...</div>
<div class="t" style="left:279px;top:556px;letter-spacing:0.131px;word-spacing:0.000px">Amazon</div>
<div class="t" style="left:414px;top:556px;letter-spacing:-0.154px;word-spacing:-0.315px">AWS Interne...</div>
<div class="t" style="left:549px;top:556px"></div>
<div class="row" style="left:0;top:588px;width:742px;background:#fff"></div>
<div class="tg" style="left:26px;top:597px"><div class="kn"></div></div>
<div class="a" style="left:131px;top:603px"><svg width="20" height="14" viewBox="0 0 20 14"><defs><linearGradient id="rs" x1="0" y1="0" x2="1" y2="0"><stop offset="0" stop-color="#1b78c4"/><stop offset="0.5" stop-color="#6cc4f4"/><stop offset="1" stop-color="#1b78c4"/></linearGradient><linearGradient id="rt" x1="0" y1="0" x2="1" y2="0"><stop offset="0" stop-color="#4cb4ee"/><stop offset="1" stop-color="#1f86d2"/></linearGradient></defs><path d="M0.5 4.5 L0.5 9.5 A9.5 3.8 0 0 0 19.5 9.5 L19.5 4.5 Z" fill="url(#rs)"/><ellipse cx="10" cy="4.6" rx="9.5" ry="3.9" fill="url(#rt)"/><path d="M3 3.6 L7 4 M6 7 L8.5 5.6 M12 3 L14.5 4.6 L17 4.9" stroke="#e6f4fd" stroke-width="0.8" fill="none"/></svg></div>
<div class="t" style="left:153px;top:601px;letter-spacing:-0.059px;word-spacing:0.000px">(tgw-02038...</div>
<div class="t" style="left:279px;top:601px;letter-spacing:0.131px;word-spacing:0.000px">Amazon</div>
<div class="t" style="left:414px;top:601px;letter-spacing:-0.348px;word-spacing:-0.121px">AWS Transit ...</div>
<div class="t" style="left:549px;top:601px"></div>
<div class="row" style="left:0;top:633px;width:742px;background:#fbfbfb"></div>
<div class="tg" style="left:26px;top:642px"><div class="kn"></div></div>
<div class="a" style="left:131px;top:648px"><svg width="20" height="14" viewBox="0 0 20 14"><defs><linearGradient id="rs" x1="0" y1="0" x2="1" y2="0"><stop offset="0" stop-color="#1b78c4"/><stop offset="0.5" stop-color="#6cc4f4"/><stop offset="1" stop-color="#1b78c4"/></linearGradient><linearGradient id="rt" x1="0" y1="0" x2="1" y2="0"><stop offset="0" stop-color="#4cb4ee"/><stop offset="1" stop-color="#1f86d2"/></linearGradient></defs><path d="M0.5 4.5 L0.5 9.5 A9.5 3.8 0 0 0 19.5 9.5 L19.5 4.5 Z" fill="url(#rs)"/><ellipse cx="10" cy="4.6" rx="9.5" ry="3.9" fill="url(#rt)"/><path d="M3 3.6 L7 4 M6 7 L8.5 5.6 M12 3 L14.5 4.6 L17 4.9" stroke="#e6f4fd" stroke-width="0.8" fill="none"/></svg></div>
<div class="t" style="left:153px;top:646px;letter-spacing:-0.180px;word-spacing:0.000px">(vgw-09365...</div>
<div class="t" style="left:279px;top:646px;letter-spacing:0.131px;word-spacing:0.000px">Amazon</div>
<div class="t" style="left:414px;top:646px;letter-spacing:-0.233px;word-spacing:-0.236px">AWS Virtual...</div>
<div class="t" style="left:549px;top:646px"></div>
<div class="a" style="left:743px;top:47px;width:23px;height:613px;background:#fbfbfb"></div>
<div class="a" style="left:0;top:660px;width:766px;height:23px;background:#fbfbfb"></div>
<svg class="a" style="left:746px;top:58px" width="16" height="12" viewBox="0 0 16 12"><path d="M2 10 L14 10 L8 3 Z" fill="#8a8a8a" stroke="#8a8a8a" stroke-width="2" stroke-linejoin="round"/></svg>
<div class="a" style="left:747px;top:82px;width:13px;height:25px;border-radius:7px;background:#8a8a8a"></div>
<svg class="a" style="left:746px;top:636px" width="16" height="12" viewBox="0 0 16 12"><path d="M2 2 L14 2 L8 9 Z" fill="#8a8a8a" stroke="#8a8a8a" stroke-width="2" stroke-linejoin="round"/></svg>
<svg class="a" style="left:11px;top:663px" width="14" height="16" viewBox="0 0 14 16"><path d="M11 2 L11 14 L4 8 Z" fill="#8a8a8a" stroke="#8a8a8a" stroke-width="2" stroke-linejoin="round"/></svg>
<svg class="a" style="left:718px;top:663px" width="14" height="16" viewBox="0 0 14 16"><path d="M3 2 L3 14 L10 8 Z" fill="#8a8a8a" stroke="#8a8a8a" stroke-width="2" stroke-linejoin="round"/></svg>
<div class="a" style="left:36px;top:665px;width:670px;height:13px;border-radius:7px;background:#8a8a8a"></div>
</div>
<div class="a" style="left:1139px;top:1143px;width:18px;height:18px;border:1.5px solid #777;border-radius:3px;background:#fff"></div>
<div class="t" style="left:1163px;top:1145px;color:#333;letter-spacing:0.115px;word-spacing:-0.584px">Only show disabled devices</div>
<div class="a" style="left:1780px;top:1126px;width:124px;height:45px;background:#ffcb3b;border-radius:5px"><div class="t" style="left:0;width:100%;text-align:center;top:12px;font-size:20px;color:#222;--os:19;letter-spacing:-0.785px;word-spacing:0.000px">Close</div></div>
<svg class="a" style="left:1085px;top:375px" width="85" height="60" viewBox="1085 375 85 60"><path d="M1092 428 L1148 392" stroke="#fb7d2a" stroke-width="4"/><path d="M1138.5 388 L1163 384.5 L1149 404.5 Z" fill="#fb7d2a"/></svg>
</body></html>
